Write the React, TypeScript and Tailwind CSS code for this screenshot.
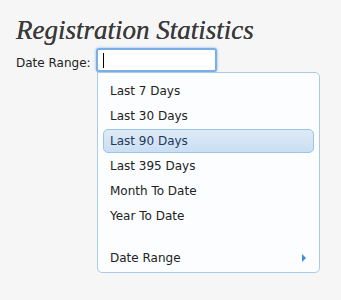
import React from 'react';

const items = ['Last 7 Days', 'Last 30 Days', 'Last 90 Days', 'Last 395 Days', 'Month To Date', 'Year To Date'];

const App: React.FC = () => {
  return (
    <div className="min-h-[300px] w-[341px] bg-[#f6f6f6] px-4 pt-[14px] font-['DejaVu_Sans',sans-serif] text-[12px] text-[#222]">
      <h1 className="font-['Liberation_Serif',serif] text-[27px] italic leading-[32px] text-[#3a3a3a] [text-shadow:0_0_0.4px_#3a3a3a]">Registration Statistics</h1>
      <div className="mt-[2px] flex items-start">
        <label className="mt-[6px] w-[80px]">Date Range:</label>
        <div className="flex flex-col">
          <div className="flex h-[24px] w-[121px] items-center rounded-[3px] border-2 border-[#7aaee6] bg-white pl-[5px] shadow-[0_0_3px_#8cb8ea]">
            <span className="h-[15px] w-px bg-black" />
          </div>
          <div className="ml-[1px] w-[223px] rounded-b-[5px] rounded-tr-[5px] border border-[#a9cbe9] bg-[#fbfdfe] px-[5px] pb-[3px] pt-[6px]">
            {items.map((it) => (
              <div
                key={it}
                className={
                  it === 'Last 90 Days'
                    ? 'flex h-[24px] items-center rounded-[5px] border border-[#9cc3e8] bg-gradient-to-b from-[#dfeaf6] to-[#cadff3] px-[6px] text-[#1d3a5c]'
                    : 'flex h-[24px] items-center border border-transparent px-[6px]'
                }
                style={{ marginBottom: 1 }}
              >
                {it}
              </div>
            ))}
            <div className="h-[18px]" />
            <div className="flex h-[22px] items-center justify-between px-[7px]">
              <span>Date Range</span>
              <span className="mr-[1px] h-0 w-0 border-y-[4px] border-l-[4px] border-y-transparent border-l-[#3a8fdc]" />
            </div>
          </div>
        </div>
      </div>
    </div>
  );
};

export default App;
